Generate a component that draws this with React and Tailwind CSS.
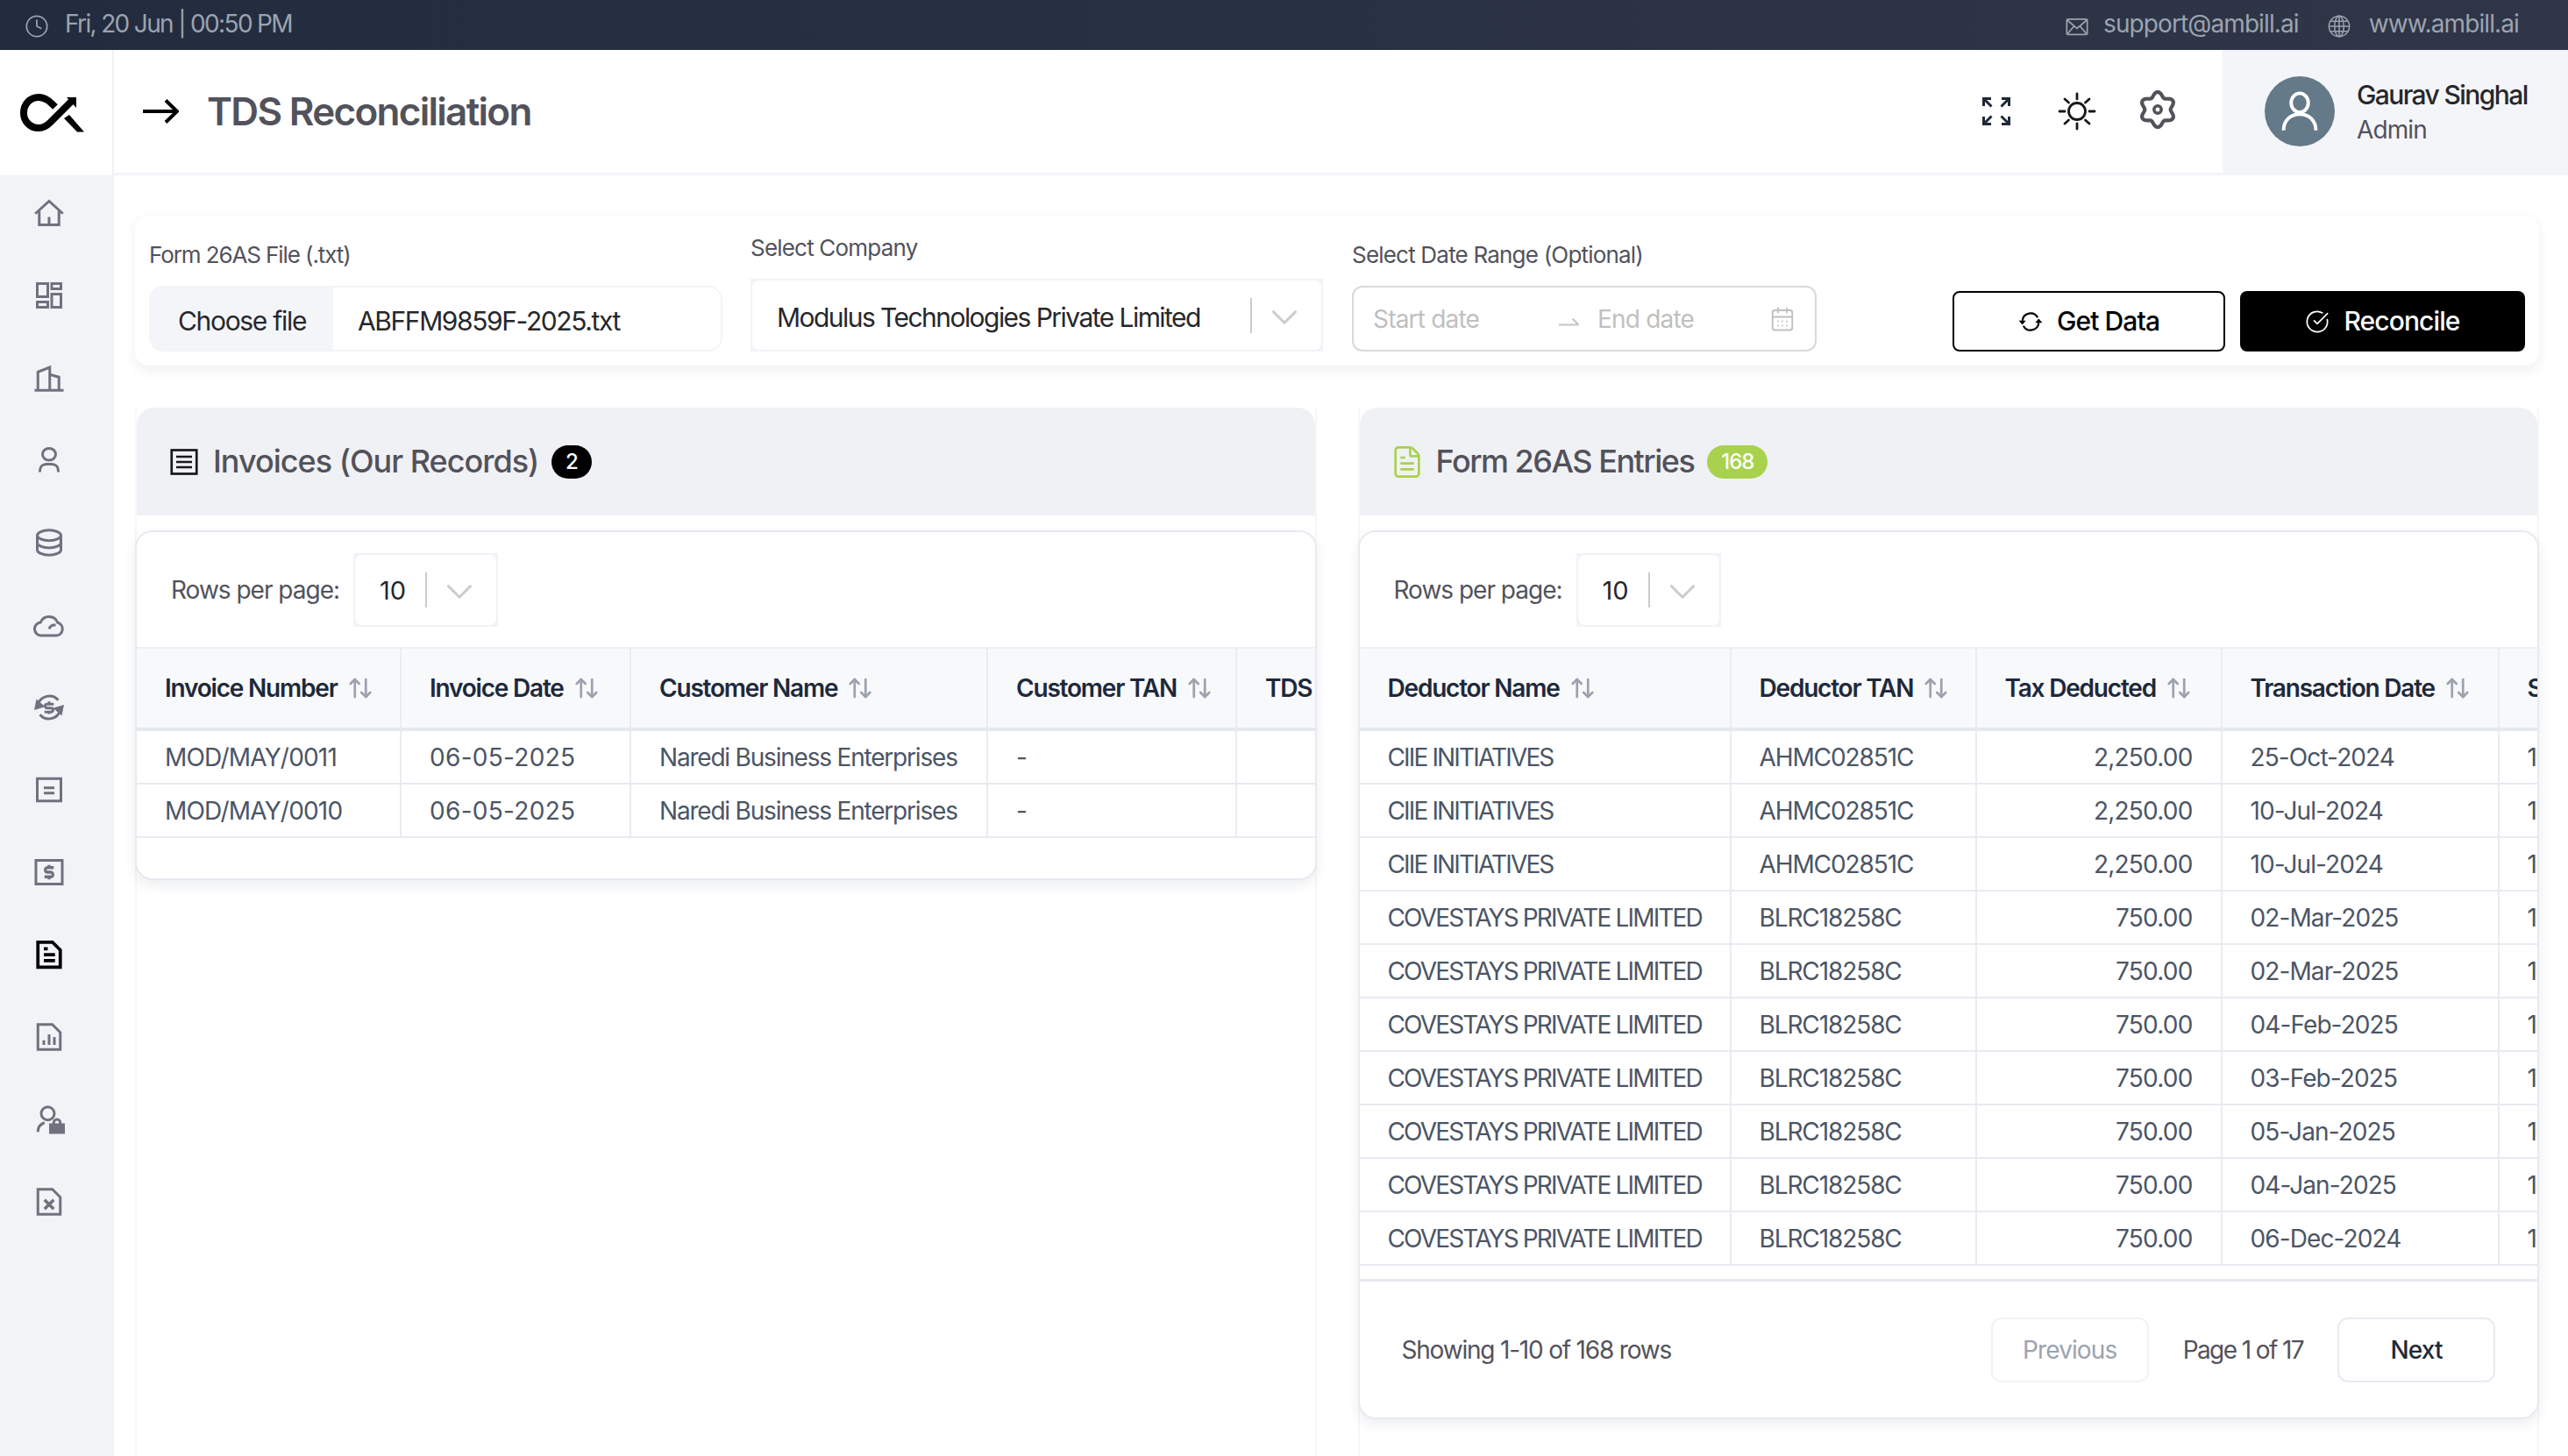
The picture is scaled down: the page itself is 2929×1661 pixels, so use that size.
import React from "react";
import { ArrowUpDown, ChevronDown, Clock, CircleCheckBig, FileText, CalendarDays } from "lucide-react";

function Svg({ children, strokeWidth = 2 }) {
  return (
    <svg
      viewBox="0 0 24 24"
      fill="none"
      stroke="currentColor"
      strokeWidth={strokeWidth}
      className="w-[36px] h-[36px]"
    >
      {children}
    </svg>
  );
}

const navIcons = [
  <Svg key="home">
    <path d="M1.5 12.5 12 3l10.5 9.500" />
    <path d="M4.500 10.500V21h15V10.500" />
    <path d="M12 21v-6" />
  </Svg>,
  <Svg key="grid">
    <rect x="3" y="3" width="8" height="10" />
    <rect x="14" y="3" width="7" height="4" />
    <rect x="3" y="17" width="8" height="4" />
    <rect x="14" y="11" width="7" height="10" />
  </Svg>,
  <Svg key="building">
    <path d="M1 21.500h22" />
    <path d="M3.500 21.500V7.500L12.500 4v17.500" />
    <path d="M12.500 9.500l7 2v10" />
  </Svg>,
  <Svg key="user">
    <ellipse cx="12" cy="7.500" rx="5" ry="4.500" />
    <path d="M5 21v-1c0-3 2-5 5-5h4c3 0 5 2 5 5v1" />
  </Svg>,
  <Svg key="db">
    <ellipse cx="12" cy="6.500" rx="9" ry="4" />
    <path d="M3 6.500v11c0 2.200 4 4 9 4s9-1.800 9-4v-11" />
    <path d="M3 12c0 2.200 4 4 9 4s9-1.800 9-4" />
  </Svg>,
  <Svg key="cloud">
    <path d="M6.500 20h11a5 5 0 0 0 1-9.800A7 7 0 0 0 5.500 10 5 5 0 0 0 6.500 20Z" />
    <path d="M12 15c.6-2 2.500-3.200 5-3" />
  </Svg>,
  <Svg key="swap">
    <path d="M3.500 10A9 9 0 0 1 19 6.500" />
    <path d="M20.500 14A9 9 0 0 1 5 17.500" />
    <path d="M2 12.500l1-5 4 3.500z" fill="currentColor" />
    <path d="M22 11.500l-1 5-4-3.500z" fill="currentColor" />
    <path d="M15.500 9.500H10.500a1.500 1.500 0 0 0 0 3h3a1.500 1.500 0 0 1 0 3H8.500M12 7.500v1.500M12 15.500V17" />
  </Svg>,
  <Svg key="list">
    <rect x="3" y="3.500" width="18" height="17" />
    <path d="M8 10.500h8M8 14.500h8" />
  </Svg>,
  <Svg key="dollar">
    <rect x="2" y="3" width="20" height="18" />
    <path d="M15.500 8.500H10.500a1.800 1.800 0 0 0 0 3.500h3a1.800 1.800 0 0 1 0 3.500H8.500M12 6.500v2M12 15.500v2" strokeWidth="2.200" />
  </Svg>,
  <Svg key="doc" strokeWidth="2.500">
    <path d="M3.500 2.500h11l6 6v13h-17z" />
    <path d="M8 7.500h3M8 12h8.500M8 16.500h8.500" />
  </Svg>,
  <Svg key="bars">
    <path d="M3.500 2.500h11l6 6v13h-17z" />
    <path d="M8 18v-3.500M12 18V10M16 18v-6" />
  </Svg>,
  <Svg key="lock">
    <circle cx="11" cy="7.500" r="5" />
    <path d="M3.500 21.500c0-3.500 2-6 5-7" />
    <path d="M13 16h10v6H13z" fill="currentColor" />
    <path d="M15.500 16v-1.500a2.500 2.500 0 0 1 5 0V16" />
  </Svg>,
  <Svg key="excel">
    <path d="M3.500 2.500h11l6 6v13h-17z" />
    <path d="M8.500 10.500l7 7M15.500 10.500l-7 7" strokeWidth="2.400" />
  </Svg>,
];

function Logo() {
  return (
    <svg viewBox="12 14 74 44" className="w-[74px] h-[44px]">
      <path
        d="M52 29C46 23 41 18 33 18 23 18 16 26 16 36 16 46 24 53 33 53 38 53 42 51 46 47L72 21"
        fill="none"
        stroke="black"
        strokeWidth="8"
      />
      <path d="M65 18H76V30Z" fill="black" />
      <path d="M62 42 68 38 85 57.500H77Z" fill="black" />
    </svg>
  );
}

// wavy six lobed outline of the settings cog
const gearPath =
  Array.from({ length: 72 }, (_, i) => {
    const a = (i / 72) * Math.PI * 2;
    const r = 15.8 + 2.5 * Math.cos(6 * a);
    return `${i === 0 ? "M" : "L"}${(20 + r * Math.sin(a)).toFixed(2)} ${(20 - r * Math.cos(a)).toFixed(2)}`;
  }).join("") + "Z";

function SelectBox({ value, className, textClass = "" }) {
  return (
    <div className={`p-[2px] bg-[#f1f3f8] ${className}`}>
      <div className="h-full bg-white rounded-[8px] flex items-center">
        <div className={`flex-1 text-[#27272a] ${textClass}`}>{value}</div>
        <div className="w-[2px] h-[40px] bg-[#c9cbd1]" />
        <ChevronDown className="w-[50px] h-[50px] text-[#cccccc] ml-[12px] mr-[17px] mt-[4px]" strokeWidth={1.5} />
      </div>
    </div>
  );
}

function RowsPerPage({ width }) {
  return (
    <div className="h-[131px] flex items-center pl-[39px]">
      <span className="text-[#52525b] text-[28px] tracking-[-1px] mr-[16px]">Rows per page:</span>
      <SelectBox value="10" className={`h-[84px] ${width}`} textClass="text-[29px] pl-[28px] pt-[3px]" />
    </div>
  );
}

function DataTable({ width, columns, rows }) {
  return (
    <div className="overflow-hidden">
      <table className={`table-fixed border-separate border-spacing-0 ${width}`}>
        <colgroup>
          {columns.map((c) => (
            <col key={c.label} className={c.w} />
          ))}
        </colgroup>
        <thead>
          <tr>
            {columns.map((c, i) => (
              <th
                key={c.label}
                className={`h-[96px] bg-[#f8f9fb] border-t-2 border-t-[#eef0f3] border-b-4 border-b-[#e5e8ef] border-r-2 border-r-[#e9ecf1] pl-[32px] text-left font-semibold text-[28px] tracking-[-1.2px] text-[#1e293b] whitespace-nowrap ${
                  i === columns.length - 1 ? "border-r-0" : ""
                }`}
              >
                <span className="inline-flex items-center gap-[11px]">
                  {c.label}
                  {c.sort !== false && <ArrowUpDown className="w-[30px] h-[30px] text-[#9ca3af]" strokeWidth={2.2} />}
                </span>
              </th>
            ))}
          </tr>
        </thead>
        <tbody>
          {rows.map((row, r) => (
            <tr key={r}>
              {columns.map((c, i) => (
                <td
                  key={c.label}
                  className={`h-[61px] border-b-2 border-b-[#e7eaf0] border-r-2 border-r-[#e9ecf1] px-[32px] text-[28px] text-[#4b5565] whitespace-nowrap ${
                    c.track
                  } ${c.right ? "text-right" : "text-left"} ${i === columns.length - 1 ? "border-r-0" : ""}`}
                >
                  {row[i]}
                </td>
              ))}
            </tr>
          ))}
        </tbody>
      </table>
    </div>
  );
}

const invoiceColumns = [
  { label: "Invoice Number", w: "w-[302px]", track: "tracking-[-0.8px]" },
  { label: "Invoice Date", w: "w-[262px]", track: "tracking-[0.3px]" },
  { label: "Customer Name", w: "w-[407px]", track: "tracking-[-1.2px]" },
  { label: "Customer TAN", w: "w-[284px]", track: "tracking-[-1px]" },
  { label: "TDS Amount", w: "w-[300px]", track: "tracking-[-1px]", sort: false },
];

const invoiceRows = [
  ["MOD/MAY/0011", "06-05-2025", "Naredi Business Enterprises", "-", ""],
  ["MOD/MAY/0010", "06-05-2025", "Naredi Business Enterprises", "-", ""],
];

const entryColumns = [
  { label: "Deductor Name", w: "w-[424px]", track: "tracking-[-1.85px]" },
  { label: "Deductor TAN", w: "w-[280px]", track: "tracking-[-1.1px]" },
  { label: "Tax Deducted", w: "w-[280px]", track: "tracking-[-0.8px]", right: true },
  { label: "Transaction Date", w: "w-[316px]", track: "tracking-[-0.9px]" },
  { label: "Section", w: "w-[200px]", track: "tracking-[-0.9px]", sort: false },
];

const entryRows = [
  ["CIIE INITIATIVES", "AHMC02851C", "2,250.00", "25-Oct-2024", "194J"],
  ["CIIE INITIATIVES", "AHMC02851C", "2,250.00", "10-Jul-2024", "194J"],
  ["CIIE INITIATIVES", "AHMC02851C", "2,250.00", "10-Jul-2024", "194J"],
  ["COVESTAYS PRIVATE LIMITED", "BLRC18258C", "750.00", "02-Mar-2025", "194J"],
  ["COVESTAYS PRIVATE LIMITED", "BLRC18258C", "750.00", "02-Mar-2025", "194J"],
  ["COVESTAYS PRIVATE LIMITED", "BLRC18258C", "750.00", "04-Feb-2025", "194J"],
  ["COVESTAYS PRIVATE LIMITED", "BLRC18258C", "750.00", "03-Feb-2025", "194J"],
  ["COVESTAYS PRIVATE LIMITED", "BLRC18258C", "750.00", "05-Jan-2025", "194J"],
  ["COVESTAYS PRIVATE LIMITED", "BLRC18258C", "750.00", "04-Jan-2025", "194J"],
  ["COVESTAYS PRIVATE LIMITED", "BLRC18258C", "750.00", "06-Dec-2024", "194J"],
];

function PanelHeader({ icon, title, titleClass, badge, badgeClass }) {
  return (
    <div className="h-[123px] bg-[#f0f1f5] rounded-t-[20px] flex items-center pl-[34px]">
      {icon}
      <span className={`ml-[13px] text-[36px] font-medium text-[#52525b] -mt-[2px] ${titleClass}`}>{title}</span>
      <span className={`ml-[15px] h-[38px] rounded-full flex items-center justify-center ${badgeClass}`}>{badge}</span>
    </div>
  );
}

export default function App() {
  return (
    <div className="h-screen overflow-hidden flex flex-col bg-white [font-family:Inter,sans-serif]">
      {/* top strip */}
      <div className="h-[57px] shrink-0 bg-gradient-to-r from-[#222c3e] to-[#2f3648] flex items-center justify-between pl-[28px] pr-[56px] pb-[4px] text-[#9ca3af] text-[28px] tracking-[-0.9px]">
        <div className="flex items-center gap-[18px]">
          <Clock className="w-[28px] h-[28px] mt-[6px]" strokeWidth={1.5} />
          <span className="tracking-[-1.65px]">Fri, 20 Jun | 00:50 PM</span>
        </div>
        <div className="flex items-center">
          <svg viewBox="0 0 24 24" fill="none" stroke="currentColor" strokeWidth="1.500" className="w-[28px] h-[28px] mr-[16px] mt-[6px]">
            <rect x="2" y="5" width="20" height="15" rx="1.500" />
            <path d="M2.500 6l9.500 8 9.500-8M2.500 19.500 9 12M21.500 19.500 15 12" />
          </svg>
          <span className="mr-[32px]">support@ambill.ai</span>
          <svg viewBox="0 0 24 24" fill="none" stroke="currentColor" strokeWidth="1.300" className="w-[28px] h-[28px] mr-[20px] mt-[6px]">
            <circle cx="12" cy="12" r="10" />
            <ellipse cx="12" cy="12" rx="4.500" ry="10" />
            <path d="M12 2v20M2 12h20M3.500 7h17M3.500 17h17" />
          </svg>
          <span>www.ambill.ai</span>
        </div>
      </div>

      <div className="flex-1 flex min-h-0">
        {/* sidebar */}
        <aside className="w-[130px] shrink-0 flex flex-col border-r-2 border-r-[#f1f2f6]">
          <div className="h-[143px] shrink-0 flex items-center justify-center pr-[8px]">
            <Logo />
          </div>
          <div className="flex-1 bg-[#f1f3f7] flex flex-col items-center gap-[58px] pt-[25px] pr-[16px] text-[#70717f]">
            {navIcons.map((icon, i) => (
              <div key={i} className={i === 9 ? "text-black" : ""}>
                {icon}
              </div>
            ))}
          </div>
        </aside>

        <main className="flex-1 min-w-0 flex flex-col">
          {/* page header */}
          <header className="h-[143px] shrink-0 flex items-center border-b-[3px] border-b-[#f3f4f8]">
            <svg viewBox="0 0 44 28" fill="none" stroke="black" strokeWidth="4" className="ml-[30px] w-[44px] h-[28px]">
              <path d="M3 14h38M29 1.500 42 14 29 26.500" />
            </svg>
            <h1 className="ml-[32px] text-[44px] font-semibold tracking-[-1.7px] text-[#52525b]">TDS Reconciliation</h1>
            <div className="ml-auto flex items-center gap-[48px] mr-[52px]">
              <svg viewBox="0 0 32 32" fill="none" stroke="#1f2937" strokeWidth="3" className="w-[44px] h-[32px]">
                <path d="M1.500 10V1.500H10M1.500 1.500l9 9M30.500 10V1.500H22M30.500 1.500l-9 9M1.500 22v8.500H10M1.500 30.500l9-9M30.500 22v8.500H22M30.500 30.500l-9-9" />
              </svg>
              <svg viewBox="0 0 44 44" fill="none" stroke="#18181b" strokeWidth="2.800" strokeLinecap="round" className="w-[44px] h-[44px]">
                <circle cx="22" cy="22" r="9.500" />
                <path d="M22 2v6M22 36v6M2 22h6M36 22h6M8 8l4.500 4M36 8l-4.500 4M8 36l4.500-4M36 36l-4.500-4" />
              </svg>
              <svg viewBox="0 0 40 40" fill="none" stroke="#52525b" className="w-[44px] h-[44px] -mt-[4px]">
                <path d={gearPath} strokeWidth="3.800" strokeLinejoin="round" />
                <circle cx="20" cy="20" r="3.800" strokeWidth="3.200" />
              </svg>
            </div>
            <div className="w-[394px] h-full bg-[#f4f5f9] flex items-center pl-[48px]">
              <div className="w-[80px] h-[80px] rounded-full bg-[#657a88] flex items-center justify-center">
                <svg viewBox="0 0 24 24" fill="none" stroke="white" strokeWidth="1.800" className="w-[52px] h-[52px]">
                  <ellipse cx="12" cy="7.500" rx="4.500" ry="5" />
                  <path d="M3.500 22c0-5 3.500-8.500 8.500-8.500s8.500 3.500 8.500 8.500" />
                </svg>
              </div>
              <div className="ml-[25px] mt-[2px]">
                <div className="text-[30px] font-medium tracking-[-1.6px] leading-[40px] text-[#27272a]">Gaurav Singhal</div>
                <div className="text-[28px] tracking-[-0.9px] leading-[40px] text-[#52525b]">Admin</div>
              </div>
            </div>
          </header>

          <div className="flex-1 min-h-0 pl-[24px] pr-[33px] pt-[45px]">
            {/* filter bar */}
            <div className="h-[172px] rounded-[16px] shadow-[0_6px_14px_rgba(30,40,60,0.07)] border-t border-t-[#f8f9fb] flex items-end pl-[16px] pr-[16px] pb-[16px]">
              <div className="w-[654px]">
                <label className="block text-[26px] tracking-[-1.1px] text-[#52525b] mb-[16px]">Form 26AS File (.txt)</label>
                <div className="h-[75px] flex rounded-[16px] border-2 border-[#f3f4f8] overflow-hidden">
                  <div className="w-[208px] bg-[#f4f5f9] flex items-center justify-center pt-[5px] text-[30px] tracking-[-1.3px] text-[#27272a]">Choose file</div>
                  <div className="flex-1 flex items-center pl-[28px] pt-[5px] text-[30px] tracking-[-1.4px] text-[#27272a]">ABFFM9859F-2025.txt</div>
                </div>
              </div>
              <div className="w-[653px] ml-[32px]">
                <label className="block text-[26px] tracking-[-0.8px] text-[#52525b] mb-[16px]">Select Company</label>
                <SelectBox value="Modulus Technologies Private Limited" className="h-[83px]" textClass="text-[30px] tracking-[-1.55px] pl-[28px] pt-[5px]" />
              </div>
              <div className="w-[530px] ml-[33px]">
                <label className="block text-[26px] tracking-[-0.8px] text-[#52525b] mb-[16px]">Select Date Range (Optional)</label>
                <div className="h-[75px] rounded-[12px] border-2 border-[#d9d9d9] flex items-center pl-[22px] pr-[22px] text-[28px] tracking-[-0.8px] text-[#bfbfbf]">
                  <span className="w-[212px]">Start date</span>
                  <svg viewBox="0 0 24 10" fill="none" stroke="#c4c4c4" strokeWidth="2" className="w-[24px] h-[10px] mr-[20px] mt-[6px]">
                    <path d="M0 8.500h22.500M15.500 1.500l7 7" />
                  </svg>
                  <span>End date</span>
                  <CalendarDays className="ml-auto w-[30px] h-[30px]" strokeWidth={1.5} />
                </div>
              </div>
              <div className="ml-auto flex gap-[17px]">
                <button className="w-[311px] h-[69px] rounded-[8px] border-2 border-black flex items-center justify-center gap-[16px] text-[30px] font-medium tracking-[-0.9px] text-black">
                  <svg viewBox="0 0 24 24" fill="none" stroke="currentColor" strokeWidth="1.800" className="w-[28px] h-[28px]">
                    <path d="M4 11A8 8 0 0 1 19 8M20 13A8 8 0 0 1 5 16" />
                    <path d="M0.500 11h7l-3.500 4zM23.500 13h-7l3.500-4z" fill="currentColor" stroke="none" />
                  </svg>
                  Get Data
                </button>
                <button className="w-[325px] h-[69px] rounded-[8px] bg-black flex items-center justify-center gap-[16px] text-[30px] font-medium tracking-[-0.9px] text-white">
                  <CircleCheckBig className="w-[28px] h-[28px]" strokeWidth={1.5} />
                  Reconcile
                </button>
              </div>
            </div>

            {/* panels */}
            <div className="grid grid-cols-2 gap-[47px] mt-[48px]">
              <section className="h-[1200px] border-x-2 border-x-[#f6f7f9]">
                <PanelHeader
                  icon={
                    <svg viewBox="0 0 24 24" fill="none" stroke="#18181b" strokeWidth="1.800" className="w-[36px] h-[36px] mx-[2px]">
                      <rect x="2.500" y="3" width="19" height="18" />
                      <path d="M6 8h12M6 12h12M6 16h12" />
                    </svg>
                  }
                  title="Invoices (Our Records)"
                  titleClass="tracking-[-1px]"
                  badge="2"
                  badgeClass="w-[46px] bg-black text-white text-[24px] font-medium"
                />
                <div className="mt-[17px] -mx-[2px] rounded-[20px] border-2 border-[#e7eaf0] overflow-hidden bg-white shadow-[0_6px_14px_rgba(30,40,60,0.08)]">
                  <RowsPerPage width="w-[165px]" />
                  <DataTable width="w-[1555px]" columns={invoiceColumns} rows={invoiceRows} />
                  <div className="h-[46px]" />
                </div>
              </section>

              <section className="h-[1200px] border-x-2 border-x-[#f6f7f9]">
                <PanelHeader
                  icon={<FileText className="w-[40px] h-[40px] text-[#a8d24d]" strokeWidth={1.6} />}
                  title="Form 26AS Entries"
                  titleClass="tracking-[-1.5px]"
                  badge="168"
                  badgeClass="w-[69px] bg-[#a8d24d] text-white text-[24px] font-medium tracking-[-1px]"
                />
                <div className="mt-[17px] -mx-[2px] rounded-[20px] border-2 border-[#e7eaf0] overflow-hidden bg-white shadow-[0_6px_14px_rgba(30,40,60,0.08)]">
                  <RowsPerPage width="w-[165px]" />
                  <DataTable width="w-[1500px]" columns={entryColumns} rows={entryRows} />
                  <div className="h-[18px] border-b-[3px] border-b-[#e7eaf0]" />
                  <div className="h-[155px] flex items-center pl-[48px] pr-[48px] text-[28px] tracking-[-1.2px]">
                    <span className="text-[#52525b]">Showing 1-10 of 168 rows</span>
                    <button className="ml-auto w-[180px] h-[74px] rounded-[12px] border-2 border-[#f1f3f6] text-[#9ca3af] tracking-[-0.9px]">Previous</button>
                    <span className="mx-[39px] text-[#52525b] tracking-[-1.6px]">Page 1 of 17</span>
                    <button className="w-[180px] h-[74px] rounded-[12px] border-2 border-[#e7eaf0] text-[#1f2937] font-medium tracking-[-0.9px]">Next</button>
                  </div>
                </div>
              </section>
            </div>
          </div>
        </main>
      </div>
    </div>
  );
}
